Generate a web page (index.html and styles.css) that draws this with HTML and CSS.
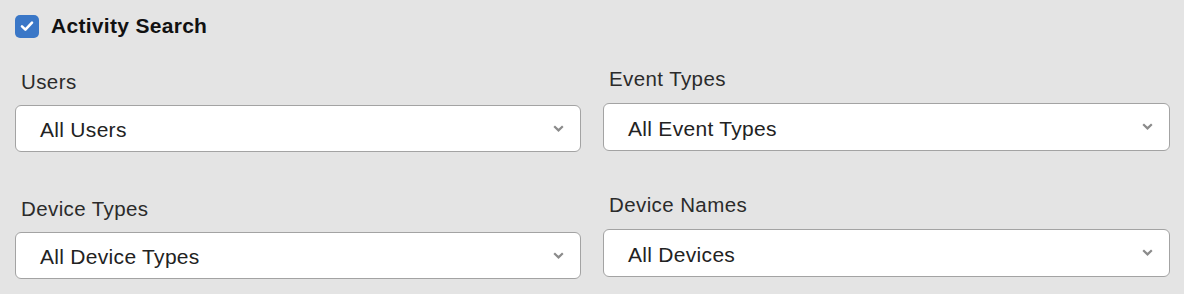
FILE: index.html
```html
<!DOCTYPE html>
<html lang="en">
<head>
    <meta charset="UTF-8">
    <title>Activity Search</title>

    <link rel="stylesheet" href="styles.css">

</head>
<body>

<div class="as_panel">

    <div class="as_head">
        <span class="as_check">
            <svg width="14" height="12" viewBox="0 0 14 12"><path d="M2 6.4 L5.4 9.6 L12 2.6" fill="none" stroke="#fff" stroke-width="2.6" stroke-linecap="round" stroke-linejoin="round"/></svg>
        </span>
        <p class="as_title">Activity Search</p>
    </div>

    <div class="as_grid">

        <div class="as_col as_col_left">
            <div class="as_field">
                <label class="as_label">Users</label>
                <div class="as_select">
                    <span>All Users</span>
                    <svg class="as_arrow" width="11" height="7" viewBox="0 0 11 7"><path d="M1.2 1.2 L5.5 5.4 L9.8 1.2" fill="none" stroke="#8b8b8b" stroke-width="2.2"/></svg>
                </div>
            </div>
            <div class="as_field">
                <label class="as_label">Device Types</label>
                <div class="as_select">
                    <span>All Device Types</span>
                    <svg class="as_arrow" width="11" height="7" viewBox="0 0 11 7"><path d="M1.2 1.2 L5.5 5.4 L9.8 1.2" fill="none" stroke="#8b8b8b" stroke-width="2.2"/></svg>
                </div>
            </div>
        </div>

        <div class="as_col as_col_right">
            <div class="as_field">
                <label class="as_label">Event Types</label>
                <div class="as_select">
                    <span>All Event Types</span>
                    <svg class="as_arrow" width="11" height="7" viewBox="0 0 11 7"><path d="M1.2 1.2 L5.5 5.4 L9.8 1.2" fill="none" stroke="#8b8b8b" stroke-width="2.2"/></svg>
                </div>
            </div>
            <div class="as_field">
                <label class="as_label">Device Names</label>
                <div class="as_select">
                    <span>All Devices</span>
                    <svg class="as_arrow" width="11" height="7" viewBox="0 0 11 7"><path d="M1.2 1.2 L5.5 5.4 L9.8 1.2" fill="none" stroke="#8b8b8b" stroke-width="2.2"/></svg>
                </div>
            </div>
        </div>

    </div>

</div>
</body>
</html>
```

FILE: styles.css
```css
*{
    margin: 0px;
    padding: 0px;
    box-sizing: border-box;
}
body{
    background-color: #e4e4e4;
    font-family: "Liberation Sans", Arial, sans-serif;
}

.as_panel{
    padding: 14px 15px 0px;
}

.as_head{
    display: flex;
    align-items: center;
    height: 24px;
}

.as_check{
    width: 24px;
    height: 23px;
    border-radius: 5px;
    background-color: #3a77c7;
    display: flex;
    align-items: center;
    justify-content: center;
}

.as_title{
    margin-left: 12px;
    font-size: 21px;
    font-weight: bold;
    color: #111;
    letter-spacing: 0.3px;
}

.as_grid{
    margin-top: 29px;
    display: grid;
    grid-template-columns: 566px 567px;
    column-gap: 22px;
}

.as_col{
    display: flex;
    flex-direction: column;
}

.as_col_left{
    padding-top: 3px;
    gap: 45px;
}

.as_col_right{
    gap: 42px;
}

.as_field{
    display: flex;
    flex-direction: column;
}

.as_label{
    font-size: 20.5px;
    line-height: 24px;
    letter-spacing: 0.4px;
    color: #2b2b2b;
    padding-left: 6px;
    margin-bottom: 11px;
}

.as_col_right .as_label{
    margin-bottom: 12px;
}

.as_select{
    height: 47px;
    background-color: white;
    border: 1px solid #a3a3a3;
    border-radius: 6px;
    display: flex;
    align-items: center;
    justify-content: space-between;
    padding: 3px 16px 0px 24px;
    font-size: 21px;
    letter-spacing: 0.3px;
    color: #222;
}

.as_col_right .as_select{
    height: 48px;
}

.as_arrow{
    margin-top: -4px;
}
```
